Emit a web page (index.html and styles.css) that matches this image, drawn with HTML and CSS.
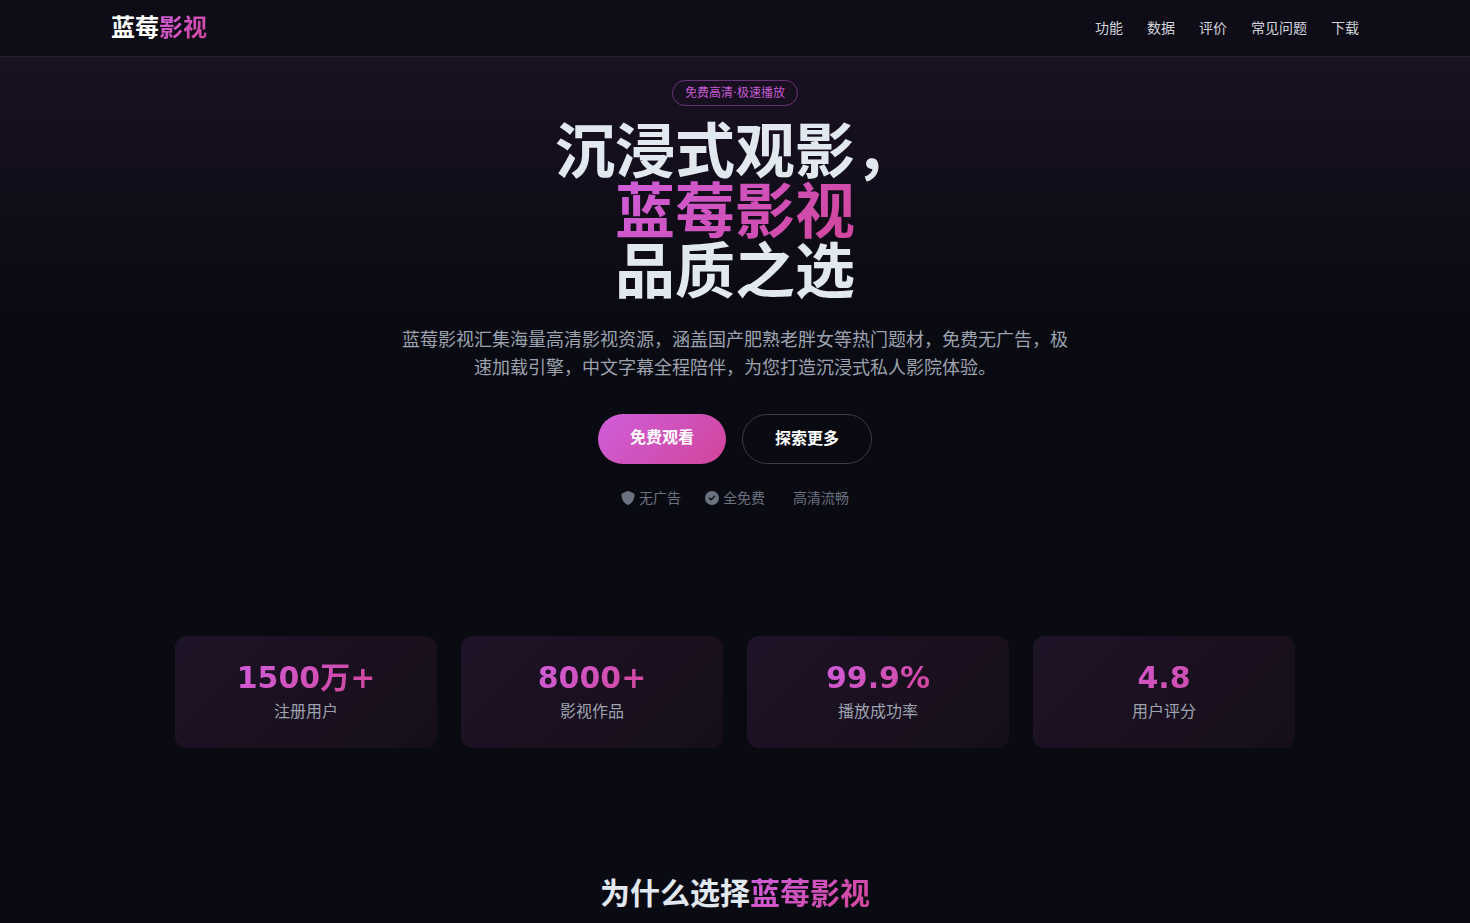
FILE: index.html
```html
<!DOCTYPE html>
<html lang="zh-CN">
<head>
<meta charset="utf-8">
<meta name="viewport" content="width=device-width, initial-scale=1">
<title>蓝莓影视</title>
<link rel="stylesheet" href="styles.css">
</head>
<body>
<header class="site-header">
  <div class="header-inner">
    <a class="logo" href="#top">蓝莓<span class="gradient-text">影视</span></a>
    <nav class="nav">
      <a href="#features">功能</a>
      <a href="#stats">数据</a>
      <a href="#reviews">评价</a>
      <a href="#faq">常见问题</a>
      <a href="#download">下载</a>
    </nav>
  </div>
</header>
<main id="top">
  <section class="hero">
    <span class="badge">免费高清·极速播放</span>
    <h1 class="hero-title">沉浸式观影，<br><span class="gradient-text">蓝莓影视</span><br>品质之选</h1>
    <p class="hero-text">蓝莓影视汇集海量高清影视资源，涵盖国产肥熟老胖女等热门题材，免费无广告，极速加载引擎，中文字幕全程陪伴，为您打造沉浸式私人影院体验。</p>
    <div class="actions">
      <a class="button button-primary" href="#download">免费观看</a>
      <a class="button button-outline" href="#features">探索更多</a>
    </div>
    <ul class="trust">
      <li><svg class="icon" viewBox="0 0 512 512" aria-hidden="true"><path d="M256 0c5 0 9 1 13 3l189 80c22 9 38 31 38 57-1 99-41 281-213 363-17 8-37 8-54 0C57 421 17 239 16 140c0-26 16-48 38-57L243 3c4-2 8-3 13-3z"/></svg>无广告</li>
      <li><svg class="icon" viewBox="0 0 512 512" aria-hidden="true"><path d="M256 512a256 256 0 1 0 0-512 256 256 0 1 0 0 512zm113-303L241 337c-9 9-25 9-34 0l-64-64c-9-9-9-25 0-34s25-9 34 0l47 47 111-111c9-9 25-9 34 0s9 25 0 34z"/></svg>全免费</li>
      <li><span class="icon-empty"></span>高清流畅</li>
    </ul>
  </section>
  <section class="stats" id="stats">
    <div class="stat"><div class="stat-value"><span class="gradient-text">1500万+</span></div><div class="stat-label">注册用户</div></div>
    <div class="stat"><div class="stat-value"><span class="gradient-text">8000+</span></div><div class="stat-label">影视作品</div></div>
    <div class="stat"><div class="stat-value"><span class="gradient-text">99.9%</span></div><div class="stat-label">播放成功率</div></div>
    <div class="stat"><div class="stat-value gradient-text">4.8</div><div class="stat-label">用户评分</div></div>
  </section>
  <section class="features" id="features">
    <h2 class="section-title">为什么选择<span class="gradient-text">蓝莓影视</span></h2>
  </section>
</main>
</body>
</html>
```

FILE: styles.css
```css
* {
  box-sizing: border-box;
}

html {
  scrollbar-width: none;
}

body {
  margin: 0;
  background: #0a0a12;
  color: #e2e8f0;
  font-family: "DejaVu Sans", "Noto Sans CJK SC", sans-serif;
  font-size: 16px;
  line-height: 24px;
}

a {
  color: inherit;
  text-decoration: none;
}

.gradient-text {
  background: linear-gradient(135deg, #cf5edb, #d1459a);
  -webkit-background-clip: text;
  background-clip: text;
  color: transparent;
}

.site-header {
  position: sticky;
  top: 0;
  z-index: 1;
  background: #0e0c16;
  border-bottom: 1px solid #25202d;
}

.header-inner {
  display: flex;
  align-items: center;
  justify-content: space-between;
  max-width: 1280px;
  margin: 0 auto;
  padding: 12px 16px;
}

.logo {
  color: #fff;
  font-size: 24px;
  font-weight: 700;
  line-height: 32px;
}

.nav {
  display: flex;
  gap: 24px;
  color: #d1d5db;
  font-size: 14px;
  line-height: 20px;
}

.hero {
  display: flex;
  flex-direction: column;
  align-items: center;
  padding: 23px 16px 64px;
  background: linear-gradient(#1a1122, #0a0a12 256px);
  text-align: center;
}

.badge {
  padding: 4px 12px;
  border: 1px solid #6b3377;
  border-radius: 999px;
  color: #c45ad0;
  font-size: 12px;
  line-height: 16px;
}

.hero-title {
  margin: 16px 0 24px;
  font-size: 60px;
  font-weight: 700;
  line-height: 60px;
}

.hero-text {
  max-width: 672px;
  margin: 0 0 32px;
  color: #9ca3af;
  font-size: 18px;
  line-height: 28px;
}

.actions {
  display: flex;
  flex-wrap: wrap;
  justify-content: center;
  gap: 16px;
}

.button {
  padding: 12px 32px;
  border-radius: 999px;
  color: #fff;
  font-weight: 700;
}

.button-primary {
  background: linear-gradient(135deg, #cf5edb, #d1459a);
  box-shadow: 0 10px 15px -3px rgb(0 0 0 / 10%);
}

.button-outline {
  border: 1px solid #3b3b42;
}

.trust {
  display: flex;
  flex-wrap: wrap;
  justify-content: center;
  gap: 24px;
  margin: 24px 0 0;
  padding: 0;
  color: #6b7280;
  font-size: 14px;
  line-height: 20px;
  list-style: none;
}

.trust li {
  display: flex;
  align-items: center;
  gap: 4px;
}

.icon {
  width: 14px;
  height: 14px;
  fill: currentColor;
}

.stats {
  display: grid;
  grid-template-columns: repeat(4, 1fr);
  gap: 24px;
  max-width: 1152px;
  margin: 0 auto;
  padding: 64px 16px;
}

.stat {
  padding: 24px;
  border-radius: 12px;
  background: linear-gradient(135deg, #1e1427, #1b1020 50%, #160f1a);
  text-align: center;
}

.stat-value {
  margin-bottom: 4px;
  font-size: 30px;
  font-weight: 700;
  line-height: 36px;
}

.stat-label {
  color: #9ca3af;
}

.features {
  padding: 64px 16px;
  text-align: center;
}

.section-title {
  margin: 0;
  font-size: 30px;
  font-weight: 700;
  line-height: 36px;
}

@media (max-width: 767px) {
  .nav {
    display: none;
  }

  .hero-title {
    font-size: 36px;
    line-height: 40px;
  }

  .stats {
    grid-template-columns: repeat(2, 1fr);
  }
}
```
